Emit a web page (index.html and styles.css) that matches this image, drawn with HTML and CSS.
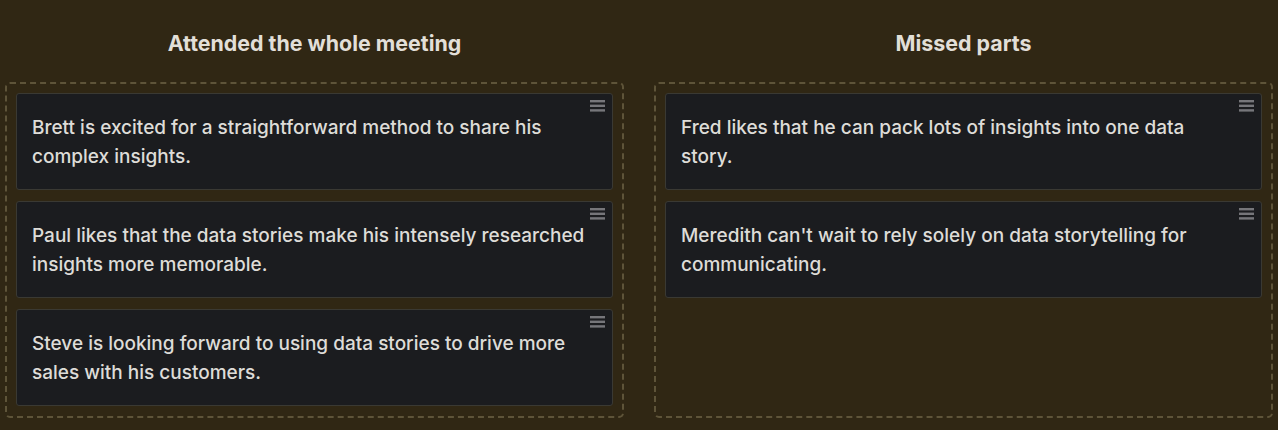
FILE: index.html
```html
<!DOCTYPE html>
<html lang="en">
<head>
<meta charset="utf-8">
<title>Sort</title>
<link rel="stylesheet" href="styles.css">
</head>
<body>
<main class="board">
  <section class="column">
    <h2 class="column-title">Attended the whole meeting</h2>
    <div class="dropzone">
      <div class="card"><p>Brett is excited for a straightforward method to share his complex insights.</p><span class="handle"><svg width="16" height="13" viewBox="0 0 16 13"><rect x="0" y="0" width="15" height="2.4"/><rect x="0" y="4.6" width="15" height="2.4"/><rect x="0" y="9.2" width="15" height="2.4"/></svg></span></div>
      <div class="card"><p>Paul likes that the data stories make his intensely researched insights more memorable.</p><span class="handle"><svg width="16" height="13" viewBox="0 0 16 13"><rect x="0" y="0" width="15" height="2.4"/><rect x="0" y="4.6" width="15" height="2.4"/><rect x="0" y="9.2" width="15" height="2.4"/></svg></span></div>
      <div class="card"><p>Steve is looking forward to using data stories to drive more sales with his customers.</p><span class="handle"><svg width="16" height="13" viewBox="0 0 16 13"><rect x="0" y="0" width="15" height="2.4"/><rect x="0" y="4.6" width="15" height="2.4"/><rect x="0" y="9.2" width="15" height="2.4"/></svg></span></div>
    </div>
  </section>
  <section class="column">
    <h2 class="column-title">Missed parts</h2>
    <div class="dropzone">
      <div class="card"><p>Fred likes that he can pack lots of insights into one data story.</p><span class="handle"><svg width="16" height="13" viewBox="0 0 16 13"><rect x="0" y="0" width="15" height="2.4"/><rect x="0" y="4.6" width="15" height="2.4"/><rect x="0" y="9.2" width="15" height="2.4"/></svg></span></div>
      <div class="card"><p>Meredith can't wait to rely solely on data storytelling for communicating.</p><span class="handle"><svg width="16" height="13" viewBox="0 0 16 13"><rect x="0" y="0" width="15" height="2.4"/><rect x="0" y="4.6" width="15" height="2.4"/><rect x="0" y="9.2" width="15" height="2.4"/></svg></span></div>
    </div>
  </section>
</main>
</body>
</html>
```
FILE: styles.css
```css
html, body {
  margin: 0;
  padding: 0;
  background: #302714;
  height: 100%;
}
body {
  font-family: "Inter", "Liberation Sans", sans-serif;
  color: #dedcd8;
}
.board {
  display: grid;
  grid-template-columns: 1fr 1fr;
  column-gap: 30px;
  padding: 0 5px;
}
.column {
  display: flex;
  flex-direction: column;
}
.column-title {
  margin: 0;
  height: 82px;
  box-sizing: border-box;
  padding-top: 30px;
  text-align: center;
  font-size: 21.4px;
  font-weight: 700;
  line-height: 26px;
  color: #e2dfd8;
}
.dropzone {
  height: 336px;
  box-sizing: border-box;
  border: 2px dashed #5e5439;
  border-radius: 5px;
  padding: 9px;
  display: flex;
  flex-direction: column;
  gap: 11px;
}
.card {
  position: relative;
  height: 97px;
  box-sizing: border-box;
  background: #1b1c1f;
  border: 1px solid #3a3933;
  border-radius: 3px;
  padding: 20px 24px 0 15px;
}
.card p {
  margin: 0;
  font-size: 19px;
  font-weight: 500;
  line-height: 28.5px;
}
.handle {
  position: absolute;
  top: 6px;
  right: 6px;
  display: block;
  line-height: 0;
}
.handle svg {
  fill: #76767a;
}
```
